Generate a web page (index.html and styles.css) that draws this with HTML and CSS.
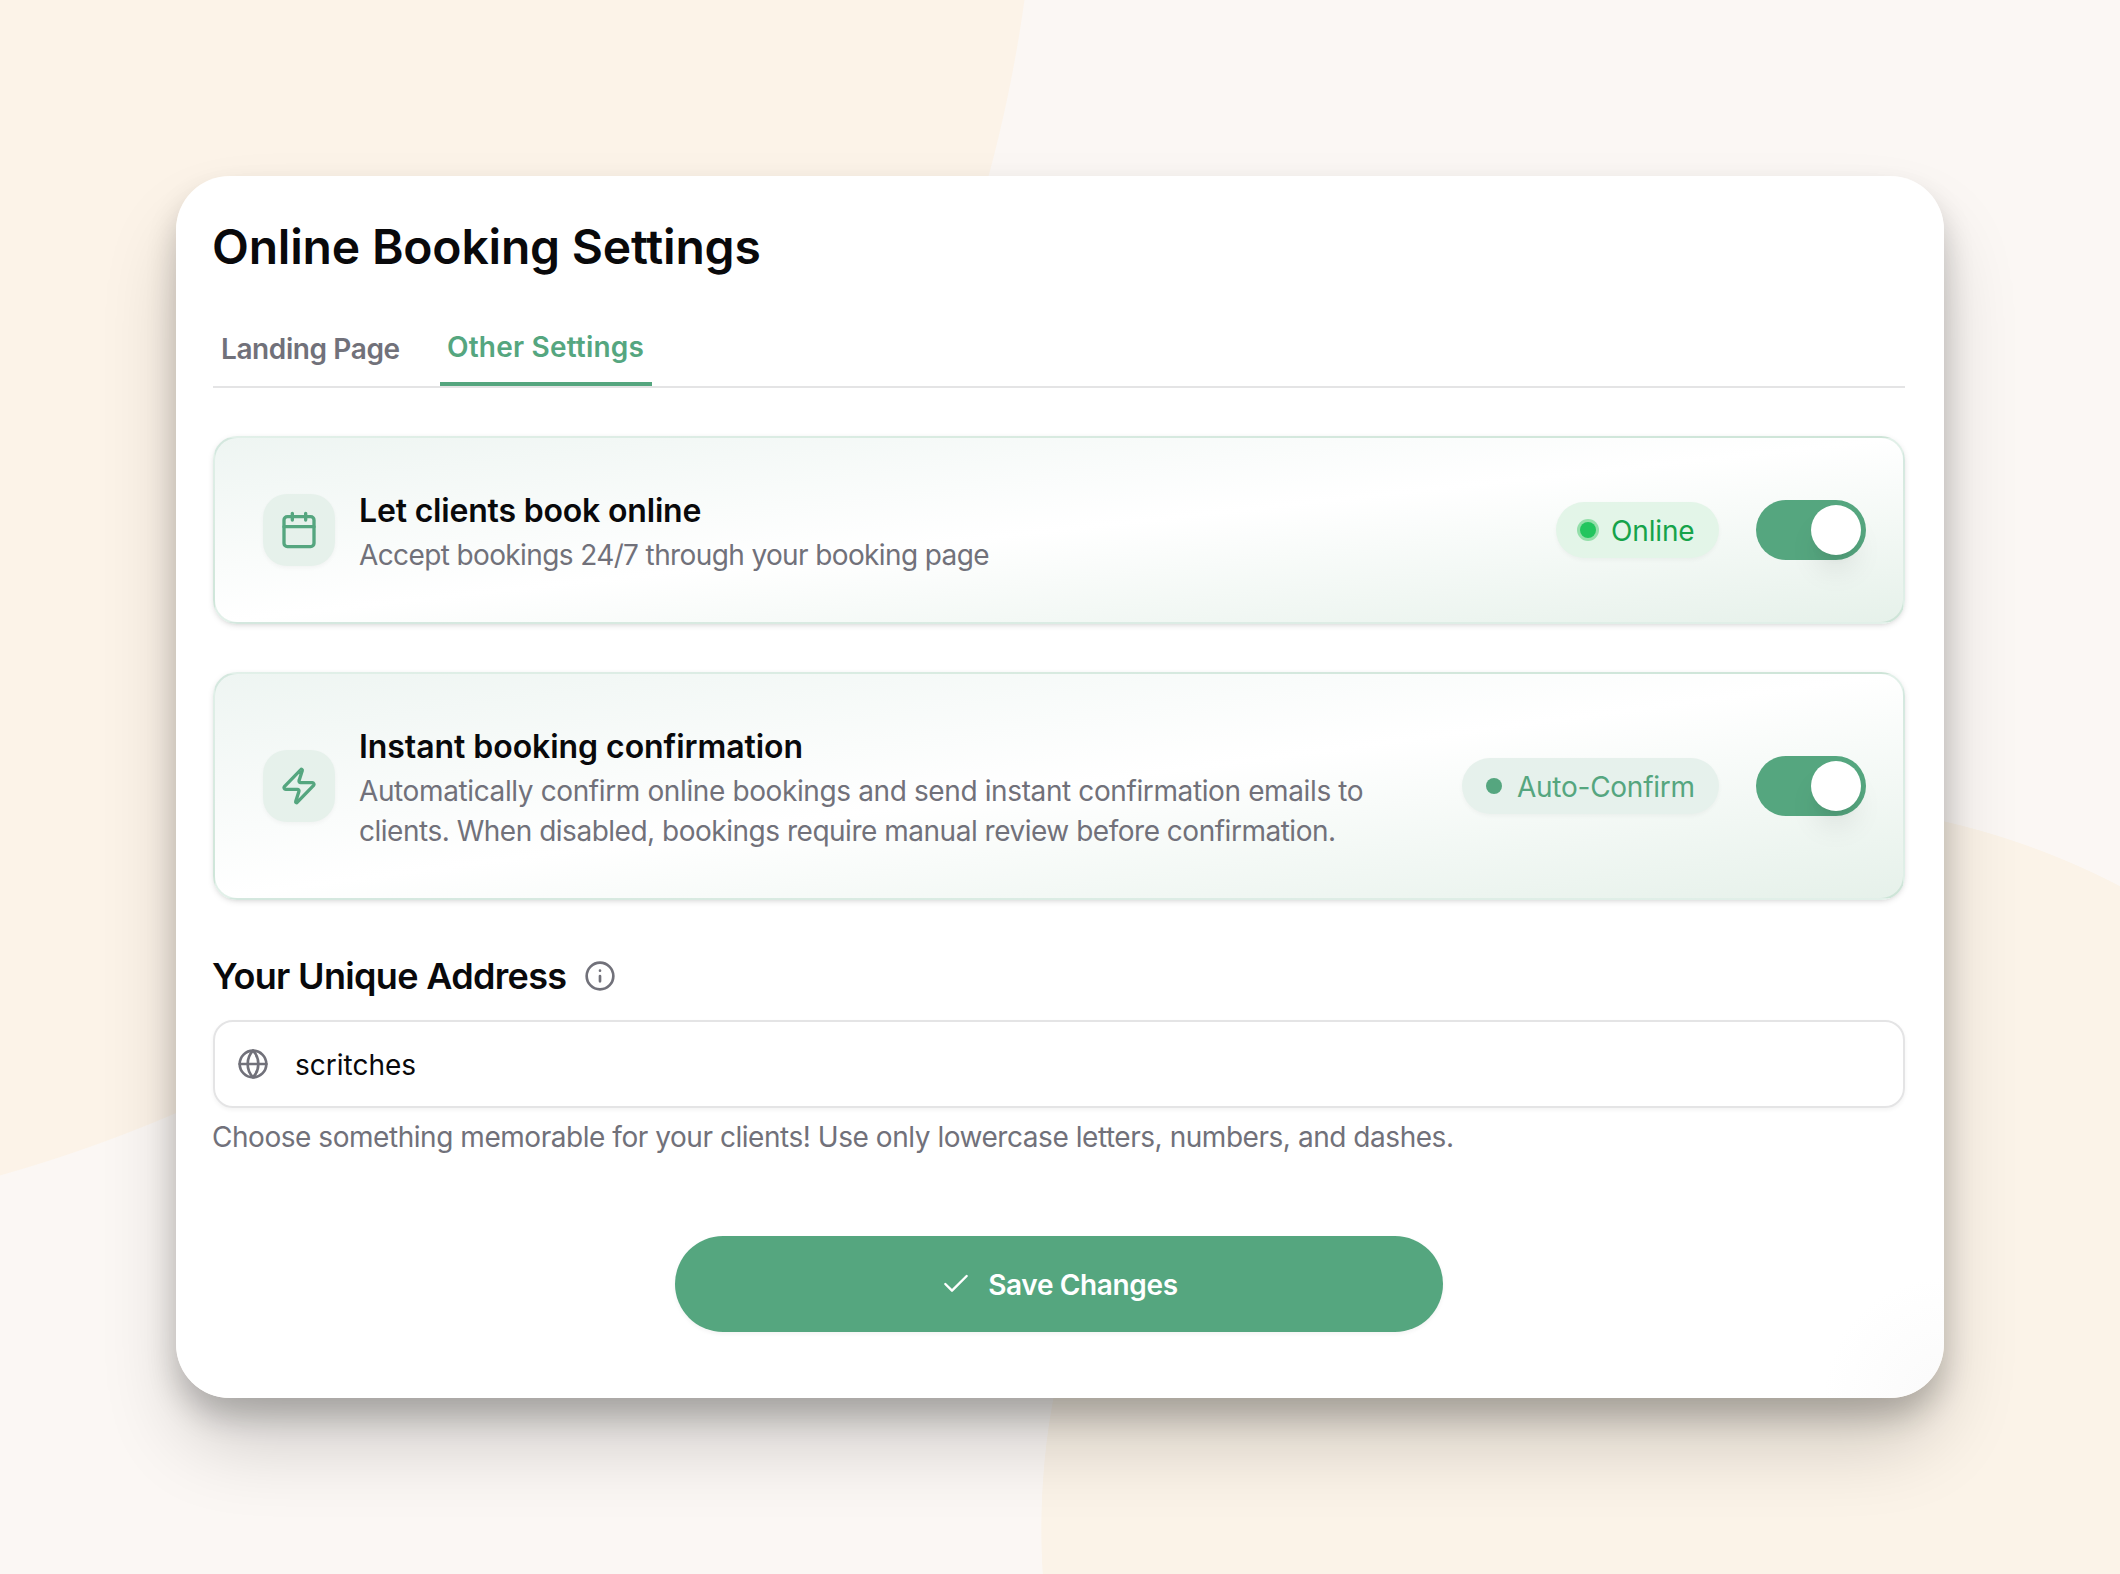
FILE: index.html
```html
<!DOCTYPE html>
<html lang="en">
<head>
<meta charset="utf-8">
<title>Online Booking Settings</title>
<link rel="stylesheet" href="styles.css">
</head>
<body>
<main class="panel">
  <h1 class="title">Online Booking Settings</h1>
  <nav class="tabs">
    <a class="tab">Landing Page</a>
    <a class="tab tab-active">Other Settings</a>
  </nav>

  <section class="options">
    <article class="option">
      <div class="option-icon">
        <svg viewBox="0 0 24 24"><path d="M8 2v4M16 2v4M3 10h18"/><rect x="3" y="4" width="18" height="18" rx="2"/></svg>
      </div>
      <div class="option-text">
        <h2 class="option-title">Let clients book online</h2>
        <p class="option-desc option-desc-short">Accept bookings 24/7 through your booking page</p>
      </div>
      <span class="badge badge-online"><i class="dot dot-ring"></i><span class="badge-label">Online</span></span>
      <span class="switch"><i class="thumb"></i></span>
    </article>

    <article class="option option-tall">
      <div class="option-icon">
        <svg viewBox="0 0 24 24"><path d="M4 14a1 1 0 0 1-.78-1.63l9.9-10.2a.5.5 0 0 1 .86.46l-1.92 6.02A1 1 0 0 0 13 10h7a1 1 0 0 1 .78 1.63l-9.9 10.2a.5.5 0 0 1-.86-.46l1.92-6.02A1 1 0 0 0 11 14z"/></svg>
      </div>
      <div class="option-text">
        <h2 class="option-title option-title-long">Instant booking confirmation</h2>
        <p class="option-desc">Automatically confirm online bookings and send instant confirmation emails to<br>clients. When disabled, bookings require manual review before confirmation.</p>
      </div>
      <span class="badge badge-auto"><i class="dot"></i><span class="badge-label">Auto-Confirm</span></span>
      <span class="switch"><i class="thumb"></i></span>
    </article>
  </section>

  <section class="address">
    <div class="address-head">
      <h2 class="address-title">Your Unique Address</h2>
      <svg class="info" viewBox="0 0 24 24"><circle cx="12" cy="12" r="10"/><path d="M12 16v-4M12 8h.01"/></svg>
    </div>
    <div class="field">
      <svg class="globe" viewBox="0 0 24 24"><circle cx="12" cy="12" r="10"/><path d="M12 2a14.5 14.5 0 0 0 0 20 14.5 14.5 0 0 0 0-20M2 12h20"/></svg>
      <span class="field-value">scritches</span>
    </div>
    <p class="hint">Choose something memorable for your clients! Use only lowercase letters, numbers, and dashes.</p>
  </section>

  <button class="save" type="button">
    <svg class="check" viewBox="0 0 24 24"><path d="M20 6 9 17l-5-5"/></svg>
    <span class="save-label">Save Changes</span>
  </button>
</main>
</body>
</html>
```
FILE: styles.css
```css
* { box-sizing: border-box; }

body {
  margin: 0;
  width: 2120px;
  height: 1574px;
  padding: 176px;
  overflow: hidden;
  font-family: Inter, "Liberation Sans", sans-serif;
  color: #09090b;
  background:
    radial-gradient(circle at -387px -196px, #fcf3e8 1424.5px, transparent 1425.5px),
    radial-gradient(736px 727px at 1777px 1529px, #fbf3e8 99.9%, transparent 100%),
    #fbf7f4;
}

h1, h2, p { margin: 0; }

svg {
  display: block;
  flex: none;
  fill: none;
  stroke: currentColor;
  stroke-width: 2;
  stroke-linecap: round;
  stroke-linejoin: round;
}

.panel {
  display: flex;
  flex-direction: column;
  height: 1222px;
  padding: 43px 39px 0 37px;
  border-radius: 54px;
  background: radial-gradient(circle at 100% 100%, #fafafa, #fff 120px);
  box-shadow: 0 18px 30px rgba(0, 0, 0, .2), 0 48px 82px -8px rgba(0, 0, 0, .2);
}

.title {
  font-size: 48px;
  line-height: 56px;
  font-weight: 600;
  letter-spacing: -.193px;
  margin-left: -1px;
}

.tabs {
  display: flex;
  align-items: flex-end;
  gap: 32px;
  margin-top: 52px;
  border-bottom: 2px solid #e4e4e5;
}
.tab {
  width: 195px;
  padding: 0 0 17px 8px;
  font-size: 28px;
  line-height: 40px;
  font-weight: 600;
  letter-spacing: -.4px;
  white-space: nowrap;
  color: #71717a;
}
.tab-active {
  width: 212px;
  padding-left: 7px;
  padding-bottom: 15px;
  border-bottom: 4px solid #55a67f;
  letter-spacing: .195px;
  color: #55a67f;
}

.options {
  display: flex;
  flex-direction: column;
  gap: 48px;
  margin-top: 48px;
}
.option {
  display: flex;
  align-items: center;
  height: 188px;
  padding: 0 37px 0 48px;
  border: 2px solid rgba(85, 166, 127, .17);
  border-radius: 24px;
  background: linear-gradient(to bottom right, #eef5f2, #fff 50%, #e6f1ea);
  box-shadow: 0 2px 6px rgba(0, 0, 0, .09), 0 2px 4px -2px rgba(0, 0, 0, .1);
}
.option-tall { height: 228px; }
.option-icon {
  display: flex;
  align-items: center;
  justify-content: center;
  width: 72px;
  height: 72px;
  border-radius: 24px;
  background: #e6f1eb;
  color: #55a67f;
  box-shadow: 0 2px 4px rgba(0, 0, 0, .04);
}
.option-icon svg { width: 40px; height: 40px; }
.option-text {
  flex: 1;
  padding: 4px 0 0 24px;
  white-space: nowrap;
}
.option-title {
  margin-bottom: 2px;
  font-size: 32px;
  line-height: 44px;
  font-weight: 600;
  letter-spacing: -.184px;
}
.option-title-long { letter-spacing: -.057px; }
.option-desc {
  font-size: 28px;
  line-height: 40px;
  letter-spacing: -.484px;
  color: #71717a;
}
.option-desc::first-line { letter-spacing: -.384px; }
.option-desc-short::first-line { letter-spacing: -.619px; }

.badge {
  display: flex;
  align-items: center;
  height: 56px;
  margin-right: 37px;
  padding: 0 24px;
  border-radius: 28px;
  font-size: 28px;
  line-height: 40px;
  white-space: nowrap;
  box-shadow: 0 2px 4px rgba(0, 0, 0, .04);
}
.badge-label { padding-top: 2px; }
.badge-online {
  width: 163px;
  background: #e3f5e8;
  color: #16a34a;
  letter-spacing: -.15px;
}
.badge-auto {
  width: 257px;
  background: #e6f1ec;
  color: #55a67f;
  letter-spacing: -.258px;
}
.dot {
  flex: none;
  width: 16px;
  height: 16px;
  margin-right: 15px;
  border-radius: 50%;
  background: currentColor;
}
.dot-ring {
  background: #22c55e;
  box-shadow: 0 0 0 3px #94dfaa;
}

.switch {
  display: flex;
  align-items: center;
  justify-content: flex-end;
  width: 110px;
  height: 60px;
  padding-right: 5px;
  border-radius: 30px;
  background: #55a67f;
}
.thumb {
  width: 50px;
  height: 50px;
  border-radius: 50%;
  background: #fff;
  box-shadow: 0 20px 30px -6px rgba(0, 0, 0, .1), 0 8px 12px -8px rgba(0, 0, 0, .1);
}

.address { margin-top: 54px; }
.address-head {
  display: flex;
  align-items: center;
  gap: 18px;
}
.address-title {
  font-size: 36px;
  line-height: 44px;
  font-weight: 600;
  letter-spacing: -.67px;
  margin-left: -1px;
}
.info { width: 32px; height: 32px; color: #71717a; }
.field {
  display: flex;
  align-items: center;
  gap: 26px;
  height: 88px;
  margin-top: 22px;
  padding-left: 22px;
  border: 2px solid #e4e4e5;
  border-radius: 20px;
  box-shadow: 0 2px 4px rgba(0, 0, 0, .05);
}
.globe { width: 32px; height: 32px; color: #71717a; }
.field-value { padding-top: 2px; font-size: 28px; line-height: 40px; }
.hint {
  margin: 9px 0 0 -1px;
  font-size: 28px;
  line-height: 40px;
  letter-spacing: -.456px;
  white-space: nowrap;
  color: #71717a;
}

.save {
  display: flex;
  align-items: center;
  justify-content: center;
  gap: 16px;
  align-self: center;
  width: 768px;
  height: 96px;
  margin-top: 79px;
  padding: 0;
  border: 0;
  border-radius: 48px;
  background: #55a67f;
  color: #fff;
  font: 600 28px/40px Inter, "Liberation Sans", sans-serif;
  letter-spacing: -.355px;
  box-shadow: 0 2px 4px rgba(0, 0, 0, .05);
}
.save-label { padding-top: 2px; }
.check { width: 32px; height: 32px; stroke-width: 1.8; }
```
